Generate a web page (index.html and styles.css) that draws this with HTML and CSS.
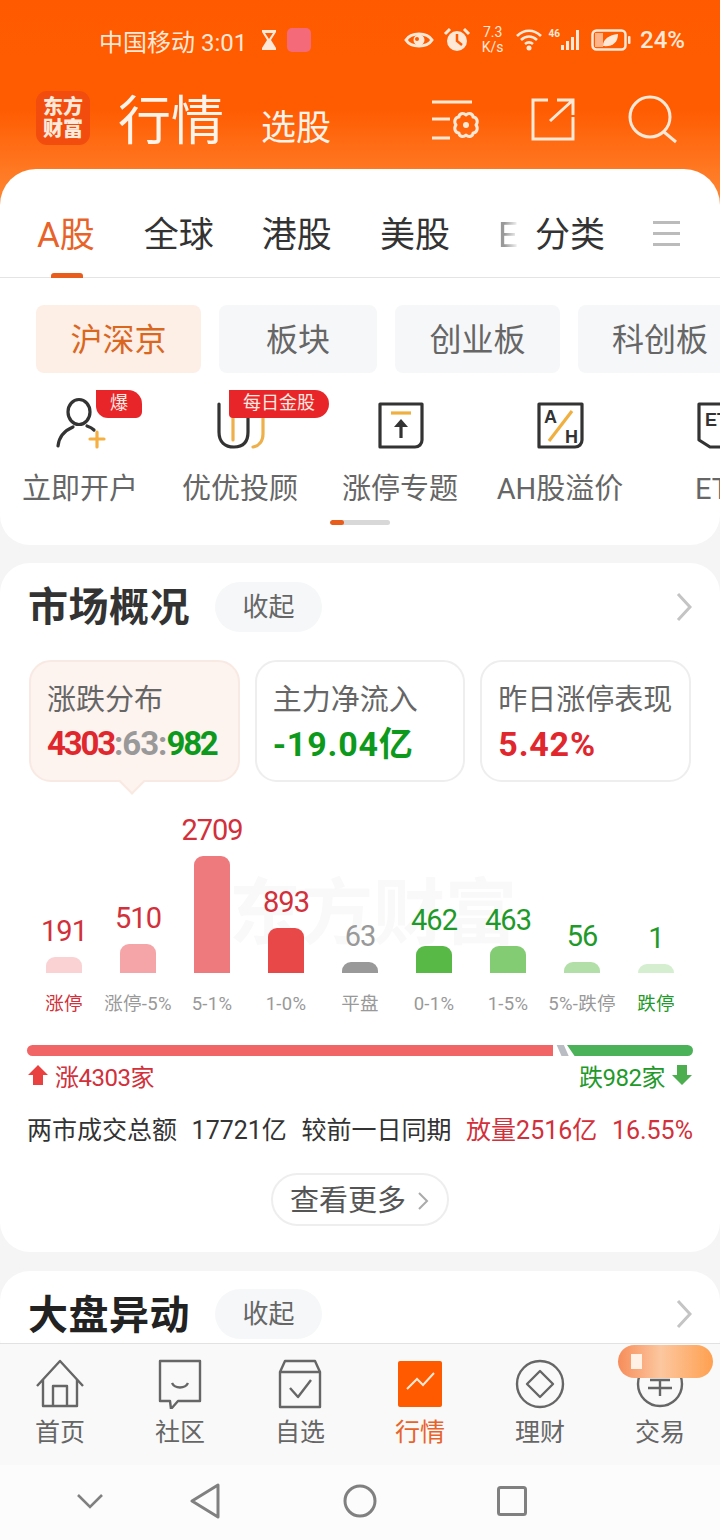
FILE: index.html
```html
<!DOCTYPE html>
<html lang="zh-CN">
<head>
    <meta charset="UTF-8">
    <title>行情</title>
    <link rel="stylesheet" href="styles.css">
</head>
<body>
<div class="phone">
    <div class="scroll">
        <div class="top">
            <!-- 状态栏 -->
            <div class="status">
                <span class="carrier">中国移动 3:01</span>
                <svg class="st-glass" width="18" height="24" viewBox="0 0 18 24"><path d="M2 2h14v2l-5 8 5 8v2H2v-2l5-8-5-8z" fill="#ffe8d6"/><path d="M5 5h8l-4 6z" fill="#ff5a00"/></svg>
                <span class="st-app"></span>
                <span class="status-right">
                    <svg width="30" height="20" viewBox="0 0 30 20"><path d="M2 10C7 2 23 2 28 10 23 18 7 18 2 10z" fill="none" stroke="#ffe8d6" stroke-width="3"/><circle cx="15" cy="10" r="5.500" fill="#ffe8d6"/><circle cx="13" cy="9" r="2" fill="#ff5a00"/></svg>
                    <svg width="28" height="26" viewBox="0 0 28 26"><circle cx="14" cy="14" r="10" fill="#ffe8d6"/><path d="M14 7v7l5 4" fill="none" stroke="#ff5a00" stroke-width="2.500"/><path d="M2 7l5-5M26 7l-5-5" stroke="#ffe8d6" stroke-width="3"/></svg>
                    <span class="speed">7.3<br>K/s</span>
                    <svg width="28" height="24" viewBox="0 0 28 24"><path d="M2 8c7-7 17-7 24 0M6 12c5-4.500 11-4.500 16 0M10 16c2.500-2 5.500-2 8 0" fill="none" stroke="#ffe8d6" stroke-width="2.600"/><circle cx="14" cy="20" r="2.500" fill="#ffe8d6"/></svg>
                    <span class="sig-wrap">
                        <span class="sig-46">46</span>
                        <svg width="22" height="22" viewBox="0 0 22 22"><path d="M1 16h3v5H1zM6 12h3v9H6zM11 8h3v13h-3zM16 1h3v20h-3z" fill="#ffe8d6"/></svg>
                    </span>
                    <svg width="40" height="22" viewBox="0 0 40 22"><rect x="1.500" y="1.500" width="33" height="19" rx="4" fill="none" stroke="#ffe8d6" stroke-width="2.500"/><rect x="4" y="4" width="8" height="14" fill="#ffb48a"/><path d="M12 17c0-7 6-11 15-12 0 9-6 13-15 12z" fill="#ffe8d6"/><rect x="37" y="7" width="2.500" height="8" rx="1" fill="#ffe8d6"/></svg>
                    <span class="battery">24%</span>
                </span>
            </div>

            <!-- 标题栏 -->
            <div class="appbar">
                <div class="logo">东方<br>财富</div>
                <span class="title">行情</span>
                <span class="subtitle">选股</span>
                <svg class="bar-icon i-set" width="50" height="44" viewBox="0 0 50 44" fill="none" stroke="#ffe8d6" stroke-width="3"><path d="M1 3h40M1 20h18M1 39h18"/><path d="M35 16c3-3 7-1 7 2 3 0 6 4 3 8 3 4 0 8-3 8 0 3-4 5-7 2-3 3-7 1-7-2-3 0-6-4-3-8-3-4 0-8 3-8 0-3 4-5 7-2z" stroke-linejoin="round"/><circle cx="35" cy="26" r="3" fill="#ffe8d6" stroke="none"/></svg>
                <svg class="bar-icon i-out" width="45" height="44" viewBox="0 0 45 44" fill="none" stroke="#ffe8d6" stroke-width="3"><path d="M17 3H2v39h40V20M42 3L19 24M26 3h16v15"/></svg>
                <svg class="bar-icon i-find" width="50" height="50" viewBox="0 0 50 50" fill="none" stroke="#ffe8d6" stroke-width="3"><circle cx="22" cy="22" r="20"/><path d="M36 37l12 10"/></svg>
            </div>

            <div class="sheet">
                <div class="tabs">
                    <span class="tab tab-on">A股<i class="tab-line"></i></span>
                    <span class="tab">全球</span>
                    <span class="tab">港股</span>
                    <span class="tab">美股</span>
                    <span class="tab tab-fade">ETF</span>
                    <span class="tab">分类</span>
                    <span class="tab-menu"><i></i><i></i><i></i></span>
                </div>

                <div class="chips">
                    <span class="chip chip-on">沪深京</span>
                    <span class="chip chip-b">板块</span>
                    <span class="chip">创业板</span>
                    <span class="chip chip-d">科创板</span>
                </div>

                <div class="quick">
                    <div class="q-item">
                        <div class="q-icon">
                            <svg width="60" height="60" viewBox="0 0 60 60" fill="none" stroke="#333" stroke-width="3.200" stroke-linecap="round"><ellipse cx="29" cy="22" rx="11" ry="12.500"/><path d="M8 56c1-10 8-16 15-19M37 36c3 1 5 2 7 4"/><path d="M47 42v15M40 49h14" stroke="#f5b041"/></svg>
                            <span class="q-badge q-badge-1">爆</span>
                        </div>
                        <span class="q-label">立即开户</span>
                    </div>
                    <div class="q-item">
                        <div class="q-icon">
                            <svg width="60" height="60" viewBox="0 0 60 60" fill="none" stroke-width="3.200" stroke-linecap="round"><path d="M23 20v30M53 20v24c0 7-4 12-10 13" stroke="#eeb04a"/><path d="M9 14v28c0 10 6 15 15 15s14-5 14-15V14" stroke="#333"/></svg>
                            <span class="q-badge q-badge-2">每日金股</span>
                        </div>
                        <span class="q-label">优优投顾</span>
                    </div>
                    <div class="q-item">
                        <div class="q-icon">
                            <svg width="60" height="60" viewBox="0 0 60 60" fill="none"><path d="M10 14h42v36c0 4-3 7-7 7H10z" stroke="#333" stroke-width="3.200" stroke-linejoin="round"/><path d="M21 23h20" stroke="#f0b040" stroke-width="3.200"/><path d="M31 48V33" stroke="#333" stroke-width="3.200"/><path d="M24 37l7-8 7 8z" fill="#333"/></svg>
                        </div>
                        <span class="q-label">涨停专题</span>
                    </div>
                    <div class="q-item">
                        <div class="q-icon">
                            <svg width="60" height="60" viewBox="0 0 60 60" fill="none"><path d="M9 14h43v36c0 4-3 7-7 7H9z" stroke="#333" stroke-width="3.200" stroke-linejoin="round"/><path d="M19 51L42 21" stroke="#f0b040" stroke-width="3.200"/><text x="14" y="33" class="q-ah">A</text><text x="35" y="53" class="q-ah">H</text></svg>
                        </div>
                        <span class="q-label">AH股溢价</span>
                    </div>
                    <div class="q-item">
                        <div class="q-icon">
                            <svg width="60" height="60" viewBox="0 0 60 60" fill="none"><path d="M9 14h50v36l-15 7H20L9 50z" stroke="#333" stroke-width="3.200" stroke-linejoin="round"/><text x="15" y="36" class="q-ah">ETF</text></svg>
                        </div>
                        <span class="q-label">ETF</span>
                    </div>
                </div>
                <div class="q-track"><i></i></div>
            </div>
        </div>

        <!-- 市场概况 -->
        <div class="card overview">
            <div class="card-head">
                <span class="card-title">市场概况</span>
                <span class="fold">收起</span>
                <svg class="head-arrow" width="16" height="30" viewBox="0 0 16 30" fill="none" stroke="#c4c4c4" stroke-width="3"><path d="M2 2l12 13L2 28"/></svg>
            </div>

            <div class="stats">
                <div class="stat stat-on">
                    <div class="stat-name">涨跌分布</div>
                    <div class="stat-num stat-tight"><span class="red">4303</span><span class="gray">:63:</span><span class="green">982</span></div>
                </div>
                <div class="stat">
                    <div class="stat-name">主力净流入</div>
                    <div class="stat-num green">-19.04亿</div>
                </div>
                <div class="stat">
                    <div class="stat-name">昨日涨停表现</div>
                    <div class="stat-num red">5.42%</div>
                </div>
            </div>

            <div class="chart">
                <div class="mark">东方财富</div>
                <div class="col"><span class="val red-l">191</span><i class="bar" style="height:16px;background:#fad2d3"></i><span class="cat red-l">涨停</span></div>
                <div class="col"><span class="val red-l">510</span><i class="bar" style="height:29px;background:#f5a5a8"></i><span class="cat">涨停-5%</span></div>
                <div class="col"><span class="val red-l">2709</span><i class="bar" style="height:117px;background:#ee7a7e"></i><span class="cat">5-1%</span></div>
                <div class="col"><span class="val red-l">893</span><i class="bar" style="height:45px;background:#e94848"></i><span class="cat">1-0%</span></div>
                <div class="col"><span class="val gray">63</span><i class="bar" style="height:11px;background:#999"></i><span class="cat">平盘</span></div>
                <div class="col"><span class="val green-l">462</span><i class="bar" style="height:27px;background:#58b947"></i><span class="cat">0-1%</span></div>
                <div class="col"><span class="val green-l">463</span><i class="bar" style="height:27px;background:#84cc74"></i><span class="cat">1-5%</span></div>
                <div class="col"><span class="val green-l">56</span><i class="bar" style="height:11px;background:#b2dfa8"></i><span class="cat">5%-跌停</span></div>
                <div class="col"><span class="val green-l">1</span><i class="bar" style="height:9px;background:#d5eed0"></i><span class="cat green-l">跌停</span></div>
            </div>

            <div class="ratio">
                <i class="r-up"></i>
                <i class="r-flat"></i>
                <i class="r-down"></i>
            </div>
            <div class="ratio-text">
                <span class="red-l"><svg width="20" height="20" viewBox="0 0 20 20"><path d="M10 0l10 10h-5v10H5V10H0z" fill="#e8413f"/></svg>涨4303家</span>
                <span class="green-l">跌982家<svg width="20" height="20" viewBox="0 0 20 20"><path d="M10 20L0 10h5V0h10v10h5z" fill="#4cae4f"/></svg></span>
            </div>

            <div class="turnover">
                <span>两市成交总额</span>
                <span>17721亿</span>
                <span>较前一日同期</span>
                <span class="red-l">放量2516亿</span>
                <span class="red-l">16.55%</span>
            </div>

            <div class="more-wrap">
                <span class="more">查看更多<svg width="11" height="18" viewBox="0 0 11 18" fill="none" stroke="#aaa" stroke-width="2"><path d="M1 1l8 8-8 8"/></svg></span>
            </div>
        </div>

        <!-- 大盘异动 -->
        <div class="card card-last">
            <div class="card-head card-head-2">
                <span class="card-title">大盘异动</span>
                <span class="fold">收起</span>
                <svg class="head-arrow" width="16" height="30" viewBox="0 0 16 30" fill="none" stroke="#c4c4c4" stroke-width="3"><path d="M2 2l12 13L2 28"/></svg>
            </div>
        </div>
    </div>

    <!-- 底部导航 -->
    <div class="tabbar">
        <div class="nav">
            <svg width="50" height="50" viewBox="0 0 50 50" fill="none" stroke="#666" stroke-width="2.400" stroke-linejoin="round"><path d="M2 27L25 2l23 25M8 21v26h34V21M18 47V27h14v20"/></svg>
            <span>首页</span>
        </div>
        <div class="nav">
            <svg width="50" height="50" viewBox="0 0 50 50" fill="none" stroke="#666" stroke-width="2.400" stroke-linejoin="round"><path d="M5 2h40v40H23l-7 8-1-8H5z"/><path d="M17 24c3 6 13 6 16 0"/></svg>
            <span>社区</span>
        </div>
        <div class="nav">
            <svg width="50" height="50" viewBox="0 0 50 50" fill="none" stroke="#666" stroke-width="2.400" stroke-linejoin="round"><path d="M5 13v35h40V13L40 2H10zM5 13h40"/><path d="M15 29l8 9 13-17"/></svg>
            <span>自选</span>
        </div>
        <div class="nav nav-on">
            <svg width="50" height="50" viewBox="0 0 50 50"><rect x="3" y="2" width="44" height="46" rx="2" fill="#ff5a00"/><path d="M12 30l10-10 6 6 11-12" fill="none" stroke="#ffe8d6" stroke-width="2"/></svg>
            <span>行情</span>
        </div>
        <div class="nav">
            <svg width="50" height="50" viewBox="0 0 50 50" fill="none" stroke="#666" stroke-width="2.400"><circle cx="25" cy="25" r="23"/><path d="M25 12l13 13-13 13-13-13z" stroke-linejoin="round"/></svg>
            <span>理财</span>
        </div>
        <div class="nav">
            <svg width="50" height="50" viewBox="0 0 50 50" fill="none" stroke="#666" stroke-width="2.400"><circle cx="25" cy="25" r="22"/><path d="M15 21h20M13 29h24M25 21v16"/></svg>
            <span>交易</span>
        </div>
        <span class="promo"><i></i></span>
    </div>

    <!-- 系统导航 -->
    <div class="sysnav">
        <svg class="sys-1" width="28" height="16" viewBox="0 0 28 16" fill="none" stroke="#808080" stroke-width="2.600"><path d="M2 2l12 12L26 2"/></svg>
        <svg class="sys-2" width="30" height="36" viewBox="0 0 30 36" fill="none" stroke="#808080" stroke-width="3" stroke-linejoin="round"><path d="M28 2v32L2 18z"/></svg>
        <svg class="sys-3" width="34" height="34" viewBox="0 0 34 34" fill="none" stroke="#808080" stroke-width="3"><circle cx="17" cy="17" r="15"/></svg>
        <svg class="sys-4" width="30" height="30" viewBox="0 0 30 30" fill="none" stroke="#808080" stroke-width="3"><rect x="1.500" y="1.500" width="27" height="27" rx="2"/></svg>
    </div>
</div>
</body>
</html>
```
FILE: styles.css
```css
* {
    margin: 0;
    padding: 0;
    box-sizing: border-box;
}

body {
    font-family: "Roboto", "Noto Sans CJK SC", sans-serif;
    color: #333;
}

.phone {
    width: 720px;
    height: 1540px;
    display: flex;
    flex-direction: column;
    overflow: hidden;
    background: #f5f5f5;
}

.scroll {
    height: 1343px;
    overflow: hidden;
    flex: none;
}

.red { color: #e0272e; }
.red-l { color: #d2303a; }
.green { color: #0d9a1c; }
.green-l { color: #1f9a2a; }
.gray { color: #999; }

/* 顶部 */
.top {
    background: linear-gradient(to bottom, #ff5a00 0, #ff5c02 110px, #ff8d3a 215px, #f5f5f5 215px);
}

.status {
    height: 80px;
    padding-left: 99px;
    padding-right: 35px;
    display: flex;
    align-items: center;
    color: #ffe8d6;
    font-size: 24px;
}

.carrier { white-space: nowrap; }

.st-glass { margin-left: 13px; }

.st-app {
    width: 24px;
    height: 24px;
    margin-left: 9px;
    border-radius: 5px;
    background: #f56a78;
}

.status-right {
    margin-left: auto;
    display: flex;
    align-items: center;
    gap: 9px;
}

.speed {
    margin: 0 2px;
    font-size: 14px;
    line-height: 15px;
    text-align: center;
}

.sig-wrap {
    display: flex;
    align-items: flex-end;
    margin-left: -3px;
}

.sig-46 {
    font-size: 10px;
    font-weight: 700;
    line-height: 10px;
    align-self: flex-start;
}

.battery { font-size: 24px; font-weight: 500; }

.appbar {
    height: 89px;
    padding-left: 36px;
    padding-bottom: 10px;
    display: flex;
    align-items: center;
    color: #fff3ea;
}

.logo {
    width: 54px;
    height: 54px;
    margin-top: -4px;
    border-radius: 11px;
    background: #f24c0f;
    color: #ffe9da;
    font-size: 20px;
    font-weight: 900;
    line-height: 22px;
    text-align: center;
    padding-top: 5px;
}

.title {
    margin-left: 28px;
    margin-top: 4px;
    font-size: 53px;
    line-height: 60px;
}

.subtitle {
    margin-left: 37px;
    margin-top: 18px;
    font-size: 35px;
    line-height: 44px;
}

.bar-icon { flex: none; }
.i-set { margin-left: 100px; margin-top: 2px; }
.i-out { margin-left: 50px; margin-top: -1px; }
.i-find { margin-left: 52px; margin-top: 0; }

/* 白色面板 */
.sheet {
    height: 376px;
    background: #fff;
    border-radius: 36px 36px 30px 30px;
    overflow: hidden;
}

.tabs {
    height: 109px;
    padding: 40px 40px 0 37px;
    display: flex;
    gap: 48px;
    border-bottom: 1px solid #e4e4e4;
}

.tab {
    position: relative;
    font-size: 35px;
    line-height: 54px;
    height: 54px;
    color: #333;
    white-space: nowrap;
}

.tab-on {
    color: #e8632a;
    margin-right: 1px;
}

.tab-line {
    position: absolute;
    left: 14px;
    bottom: -15px;
    width: 32px;
    height: 5px;
    border-radius: 3px 3px 0 0;
    background: #e85d1c;
}

.tab-fade {
    width: 22px;
    margin-right: -32px;
    overflow: hidden;
    color: #999;
    -webkit-mask-image: linear-gradient(to right, #000 30%, transparent);
    mask-image: linear-gradient(to right, #000 30%, transparent);
}

.tab-menu {
    margin-left: auto;
    width: 28px;
    padding-top: 12px;
    display: flex;
    flex-direction: column;
    gap: 8px;
}

.tab-menu i {
    height: 3px;
    background: #bbb;
}

.chips {
    margin-top: 27px;
    padding-left: 36px;
    display: flex;
    gap: 18px;
}

.chip {
    flex: none;
    width: 165px;
    height: 68px;
    border-radius: 8px;
    background: #f6f7f9;
    color: #666;
    font-size: 32px;
    line-height: 70px;
    text-align: center;
}

.chip-b { width: 158px; }
.chip-d { width: 164px; }

.chip-on {
    background: #fdeee6;
    color: #d9671f;
}

.quick {
    margin-top: 17px;
    display: flex;
}

.q-item {
    flex: none;
    width: 160px;
    display: flex;
    flex-direction: column;
    align-items: center;
}

.q-icon {
    position: relative;
    width: 60px;
    height: 60px;
}

.q-ah {
    font-family: "Liberation Sans", sans-serif;
    font-size: 18px;
    font-weight: 700;
    fill: #333;
}

.q-badge {
    position: absolute;
    top: 0;
    height: 28px;
    background: #e8262a;
    color: #ffe9e0;
    font-size: 18px;
    line-height: 26px;
    text-align: center;
    white-space: nowrap;
}

.q-badge-1 {
    left: 46px;
    width: 46px;
    border-radius: 0 14px 6px 12px;
}

.q-badge-2 {
    left: 19px;
    width: 100px;
    border-radius: 0 14px 14px 4px;
}

.q-label {
    margin-top: 19px;
    font-size: 29px;
    line-height: 40px;
    color: #666;
    white-space: nowrap;
}

.q-track {
    width: 60px;
    height: 5px;
    margin: 11px auto 0;
    border-radius: 3px;
    background: #d8d8d8;
    overflow: hidden;
}

.q-track i {
    display: block;
    width: 14px;
    height: 5px;
    border-radius: 3px;
    background: #e85d1c;
}

/* 卡片 */
.card {
    margin-top: 18px;
    background: #fff;
    border-radius: 30px;
    padding: 0 29px 0 28px;
}

.card-last { margin-top: 19px; }

.overview { height: 689px; }

.card-head {
    height: 97px;
    padding-top: 19px;
    display: flex;
    align-items: flex-start;
}

.card-title {
    margin-top: 1px;
    font-size: 40px;
    font-weight: 700;
    letter-spacing: 0.5px;
    line-height: 50px;
    color: #333;
}

.card-head-2 { padding-top: 18px; }

.card-head-2 .card-title {
    margin-top: 2px;
    color: #222;
}

.fold {
    margin-left: 25px;
    width: 107px;
    height: 50px;
    border-radius: 25px;
    background: #f5f7f8;
    color: #666;
    font-size: 26px;
    line-height: 50px;
    text-align: center;
}

.head-arrow {
    margin-left: auto;
    margin-top: 10px;
    margin-right: -1px;
}

.stats {
    display: flex;
    gap: 15px;
    margin-left: 1px;
}

.stat {
    position: relative;
    flex: 1;
    height: 122px;
    padding: 18px 0 0 16px;
    border: 2px solid #eee;
    border-radius: 22px;
}

.stat-on {
    background: #fdf3ef;
    border-color: #f9e9e3;
}

.stat-on::after {
    content: "";
    position: absolute;
    left: 92px;
    bottom: -11px;
    width: 16px;
    height: 16px;
    background: #fdf3ef;
    border-right: 2px solid #f9e9e3;
    border-bottom: 2px solid #f9e9e3;
    transform: rotate(45deg);
}

.stat-name {
    font-size: 29px;
    line-height: 40px;
    color: #666;
    white-space: nowrap;
}

.stat-num {
    margin-top: 2px;
    font-size: 34px;
    font-weight: 700;
    line-height: 44px;
    letter-spacing: 0.8px;
    white-space: nowrap;
}

.stat-tight {
    font-size: 33px;
    letter-spacing: -2.200px;
}

.stat-tight .gray { letter-spacing: -1px; }

/* 柱状图 */
.chart {
    position: relative;
    height: 251px;
    margin: 0 -3px 0 -1px;
    display: flex;
    align-items: flex-end;
}

.mark {
    position: absolute;
    left: 202px;
    top: 72px;
    font-size: 72px;
    font-weight: 700;
    color: #f9f9f9;
    white-space: nowrap;
}

.col {
    position: relative;
    flex: none;
    width: 74px;
    display: flex;
    flex-direction: column;
    align-items: center;
}

.val {
    font-size: 29px;
    letter-spacing: -1px;
    line-height: 36px;
    margin-bottom: 8px;
}

.bar {
    display: block;
    width: 36px;
    border-radius: 9px 9px 0 0;
}

.cat {
    height: 60px;
    padding-top: 19px;
    font-size: 18.500px;
    letter-spacing: 0.3px;
    line-height: 24px;
    color: #999;
    white-space: nowrap;
}

.cat.red-l { color: #d2303a; }
.cat.green-l { color: #1f9a2a; }

.ratio {
    height: 11px;
    margin: 12px -2px 0 -1px;
    display: flex;
}

.ratio i {
    display: block;
    height: 11px;
}

.r-up {
    width: 526px;
    background: #f26566;
    border-radius: 6px 0 0 6px;
}

.r-flat {
    width: 24px;
    margin-left: -4px;
    background: #b9bcc2;
    clip-path: polygon(32% 0, 62% 0, 82% 100%, 52% 100%);
}

.r-down {
    flex: 1;
    margin-left: -6px;
    background: #4cb25a;
    border-radius: 0 6px 6px 0;
    clip-path: polygon(0 0, 100% 0, 100% 100%, 6% 100%);
}

.ratio-text {
    height: 38px;
    margin-right: -1px;
    display: flex;
    justify-content: space-between;
    align-items: center;
    font-size: 24px;
    letter-spacing: -0.5px;
}

.ratio-text span {
    display: flex;
    align-items: center;
    gap: 7px;
}

.turnover {
    margin: 16px -2px 0 -1px;
    display: flex;
    justify-content: space-between;
    font-size: 25px;
    line-height: 42px;
    color: #333;
    white-space: nowrap;
}

.more-wrap {
    margin-top: 21px;
    display: flex;
    justify-content: center;
}

.more {
    width: 178px;
    height: 53px;
    padding-top: 3px;
    border: 2px solid #eee;
    border-radius: 27px;
    font-size: 29px;
    line-height: 46px;
    color: #555;
    display: flex;
    justify-content: center;
    align-items: center;
    gap: 12px;
}

/* 底部导航 */
.tabbar {
    position: relative;
    flex: none;
    height: 122px;
    padding-top: 15px;
    border-top: 1px solid #e2e2e2;
    background: #f9f9f9;
    display: flex;
}

.nav {
    flex: 1;
    display: flex;
    flex-direction: column;
    align-items: center;
    font-size: 25px;
    line-height: 36px;
    color: #666;
}

.nav span { margin-top: 6px; }

.nav-on { color: #e8632a; }

.promo {
    position: absolute;
    left: 618px;
    top: 1px;
    width: 95px;
    height: 33px;
    border-radius: 17px;
    background: linear-gradient(to right, #f78d5a, #fcc79f 45%, #ffa050);
    padding: 9px 0 0 13px;
}

.promo i {
    display: block;
    width: 11px;
    height: 15px;
    background: #fff1e6;
}

/* 系统导航 */
.sysnav {
    flex: none;
    height: 75px;
    padding-bottom: 3px;
    background: #fcfcfc;
    display: flex;
    align-items: center;
}

.sys-1 { margin-left: 76px; }
.sys-2 { margin-left: 86px; }
.sys-3 { margin-left: 123px; }
.sys-4 { margin-left: 120px; }
```
